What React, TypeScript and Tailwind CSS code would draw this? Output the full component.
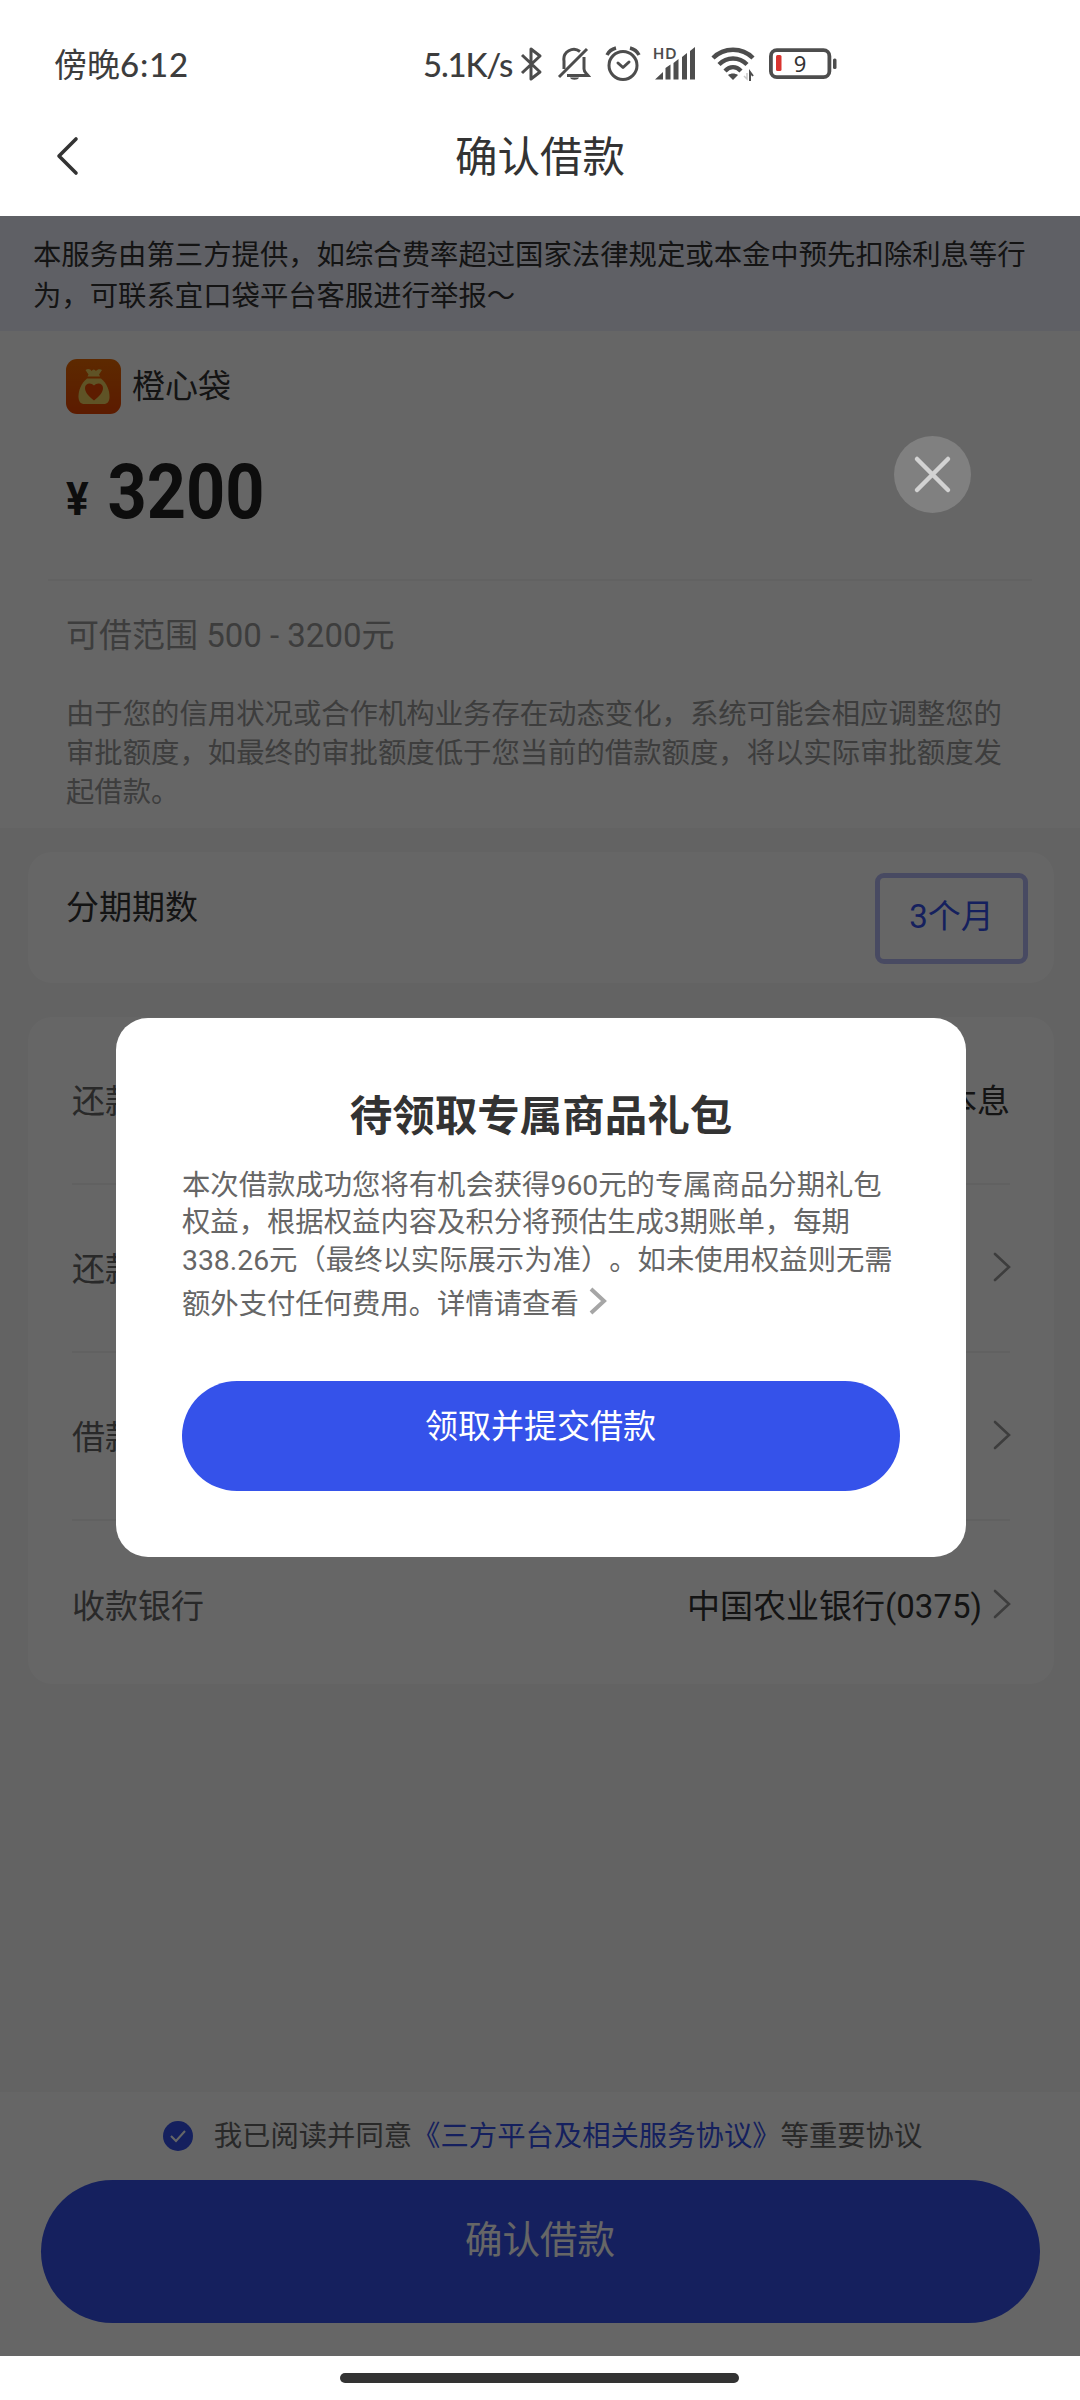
import React from 'react';

const SANS = "font-['Roboto','Noto_Sans_CJK_SC',sans-serif]";
const STATUS_FONT = "font-['Lato','Noto_Sans_CJK_SC',sans-serif]";

const StatusIcons: React.FC = () => (
  <div className="flex items-center text-[#4d4d4d]">
    <svg className="w-[24px] h-[36px] ml-[6px]" viewBox="0 0 24 36" fill="none" stroke="currentColor" strokeWidth="3">
      <path strokeLinejoin="round" d="M3 9l18 17-9 7V3l9 7L3 27" />
    </svg>
    <svg className="w-[34px] h-[36px] ml-[14px]" viewBox="0 0 34 36" fill="none" stroke="currentColor" strokeWidth="3">
      <path d="M2 31L30 3" />
      <path d="M7 23V15a10 10 0 0 1 16-9.5" />
      <path d="M27 11v12c0 3 2 4 4 6.500H10" />
      <path d="M13 31.500h9c-1 3-8 3-9 0z" fill="currentColor" stroke="none" />
    </svg>
    <svg className="w-[36px] h-[36px] ml-[14px]" viewBox="0 0 36 36" fill="none" stroke="currentColor" strokeWidth="3">
      <circle cx="18" cy="19.500" r="14" />
      <path strokeLinecap="round" strokeLinejoin="round" d="M13 17l5 4.500L24 16" />
      <path strokeWidth="3.500" d="M2 9c2-4 5-6 9-7M34 9c-2-4-5-6-9-7" />
    </svg>
    <svg className="w-[44px] h-[36px] ml-[12px]" viewBox="0 0 44 36" fill="currentColor" overflow="visible">
      <path d="M2 33.500l8-7.500v7.500zM12.500 22l5-3.500v15h-5zM20.500 17l5-4v20.500h-5zM29 11l5-4v26.500h-5zM37 5l5-4v32.500h-5z" />
      <text x="0" y="13" fontSize="14.500" fontWeight="700" letterSpacing="1" fontFamily="Lato">HD</text>
    </svg>
    <svg className="w-[44px] h-[36px] ml-[14px]" viewBox="0 0 44 36" fill="none" stroke="currentColor" strokeWidth="4.400">
      <path d="M2 12c11-11 29-11 40 0" />
      <path d="M8 18.500c8-8 20-8 28 0" />
      <path d="M14 25c5-5 11-5 16 0" />
      <path d="M17 29c3-2 7-2 10 0l-5 5z" fill="currentColor" stroke="none" />
      <path d="M39 35v-9l3 4" strokeWidth="2" />
      <path d="M36 27v6l-3-3" strokeWidth="1.500" className="text-[#c8c8c8]" />
    </svg>
    <svg className="w-[68px] h-[36px] ml-[14px]" viewBox="0 0 68 36" fill="none">
      <rect x="1.900" y="4.200" width="58.500" height="27" rx="6" stroke="currentColor" strokeWidth="3.800" />
      <rect x="7" y="9" width="5.500" height="16" rx="1.500" fill="#d9332e" />
      <rect x="64" y="12.500" width="3.500" height="10.500" rx="1.500" fill="currentColor" />
      <text x="31" y="25.500" fontSize="22" textAnchor="middle" fill="#333" fontFamily="Noto Sans">9</text>
    </svg>
  </div>
);

const Chevron: React.FC<{ className?: string }> = ({ className = '' }) => (
  <svg className={`w-[18px] h-[30px] ${className}`} viewBox="0 0 18 30" fill="none" stroke="currentColor">
    <path strokeLinecap="round" strokeWidth="2.600" d="M2 2l14 13L2 28" />
  </svg>
);

const BagLogo: React.FC = () => (
  <svg className="w-[55px] h-[55px]" viewBox="0 0 55 55">
    <defs>
      <linearGradient id="bag" x1="0" y1="0" x2="0" y2="1">
        <stop offset="0" stopColor="#e86800" />
        <stop offset="1" stopColor="#e64400" />
      </linearGradient>
    </defs>
    <rect width="55" height="55" rx="11" fill="url(#bag)" />
    <path d="M19.500 11c3-2 5-.5 6 1 1.500-2 3-2 4.500 0 1.500-2 4-2.500 6-1l-3 4.500 1 2H21.500l1-2z" fill="#eed060" />
    <path d="M21 19.500h14c6 5 8.500 12 8.500 18 0 5-2 7.500-6 7.500h-19c-4 0-6-2.500-6-7.500 0-6 2.500-13 8.500-18z" fill="#eed060" />
    <path d="M28 41.500c-5-4-9-8-9-12.500 0-5 6-6 9-2.500 3-3.500 9-2.500 9 2.500 0 4.500-4 8.500-9 12.500z" fill="#e84600" />
  </svg>
);

interface RowProps {
  label: string;
  value?: string;
  arrow?: boolean;
  last?: boolean;
}

const InfoRow: React.FC<RowProps> = ({ label, value, arrow, last }) => (
  <div
    className={`flex h-[168px] items-center justify-between text-[33px] ${
      last ? '' : 'border-b-2 border-[#f2f2f2]'
    }`}
  >
    <span className="pt-[3px] text-[#666]">{label}</span>
    <div className="flex items-center">
      <span className="pt-[3px] text-[#333]">{value}</span>
      {arrow && <Chevron className="mb-[2px] ml-[11px] -mr-[1px] text-[#999]" />}
    </div>
  </div>
);

const GiftDialog: React.FC = () => (
  <div className="absolute left-[116px] top-[802px] h-[539px] w-[850px] rounded-[32px] bg-white px-[66px] pt-[68px] [text-spacing-trim:space-all]">
    <h2 className="text-center text-[42.500px] font-bold leading-[62px] text-[#333]">待领取专属商品礼包</h2>
    <p className="mt-[19px] whitespace-nowrap text-[28.350px] leading-[37.300px] text-[#666]">
      本次借款成功您将有机会获得960元的专属商品分期礼包
      <br />
      权益，根据权益内容及积分将预估生成3期账单，每期
      <br />
      338.26元（最终以实际展示为准）。如未使用权益则无需
    </p>
    <p className="flex h-[50px] items-center pt-[2px] text-[28.350px] text-[#666]">
      额外支付任何费用。详情请查看
      <svg className="mb-[8px] ml-[10px] h-[28px] w-[18px]" viewBox="0 0 18 28" fill="none" stroke="#a6a6a6">
        <path strokeWidth="4" d="M2 2l13 12L2 26" />
      </svg>
    </p>
    <button className="mt-[52px] flex h-[110px] w-[718px] justify-center rounded-full bg-[#3552ea] pt-[21px] pr-[1px] text-[33px] leading-[49px] text-white">
      领取并提交借款
    </button>
  </div>
);

const App: React.FC = () => {
  return (
    <div className={`relative flex h-[2400px] w-[1080px] flex-col overflow-hidden bg-white ${SANS}`}>
      <header className="h-[216px]">
        <div className={`flex h-[128px] items-center pl-[54px] text-[33px] text-[#3d3d3d] ${STATUS_FONT}`}>
          <span className="w-[369px] pt-[1px]">
            傍晚<span className="font-medium tracking-[0.800px]">6:12</span>
          </span>
          <span className="w-[90px] whitespace-nowrap pt-[1px] font-medium tracking-[-1.200px]">5.1K/s</span>
          <StatusIcons />
        </div>
        <div className="flex h-[56px] items-center px-[56px]">
          <svg className="w-[24px] h-[40px]" viewBox="0 0 24 40" fill="none" stroke="#333" strokeWidth="3.600">
            <path strokeLinecap="round" strokeLinejoin="round" d="M20 3L3 20l17 17" />
          </svg>
          <h1 className="flex-1 pr-[24px] pt-[3px] text-center text-[42.500px] leading-[56px] text-[#333]">确认借款</h1>
        </div>
      </header>

      <main className="relative flex h-[2140px] flex-col bg-[#f7f7f7]">
        <div className="h-[115px] whitespace-nowrap bg-[#eef0fc] pl-[33px] pt-[19px] text-[28.370px] leading-[41.300px] text-[#333]">
          本服务由第三方提供，如综合费率超过国家法律规定或本金中预先扣除利息等行
          <br />
          为，可联系宜口袋平台客服进行举报～
        </div>

        <section className="h-[497px] bg-white px-[48px] pt-[28px]">
          <div className="flex items-center pl-[18px] text-[33px] text-[#333]">
            <BagLogo />
            <span className="ml-[11px] leading-[54px]">橙心袋</span>
          </div>
          <div className="flex h-[167px] items-baseline border-b-2 border-[#f5f5f5] pl-[18px] pt-[33px] font-bold text-[#222]">
            <div className="flex origin-left scale-x-90 items-baseline whitespace-nowrap leading-[90px]">
              <span className="-translate-y-[3px] text-[47px]">¥</span>
              <span className="ml-[21px] text-[76px]">3200</span>
            </div>
          </div>
          <div className="pl-[18px] pt-[30px] text-[33px] leading-[50px] text-[#999]">可借范围 500 - 3200元</div>
          <p className="whitespace-nowrap pl-[18px] pt-[34px] text-[28.370px] leading-[39px] text-[#999]">
            由于您的信用状况或合作机构业务存在动态变化，系统可能会相应调整您的
            <br />
            审批额度，如最终的审批额度低于您当前的借款额度，将以实际审批额度发
            <br />
            起借款。
          </p>
        </section>

        <section className="ml-[28px] mr-[26px] mt-[24px] flex h-[131px] items-start justify-between rounded-[24px] bg-white pl-[38px] pr-[26px] pt-[21px] text-[33px]">
          <span className="pt-[10px] leading-[50px] text-[#333]">分期期数</span>
          <div className="flex h-[91px] w-[153px] justify-center rounded-[9px] border-[5px] border-[#b4b9f6] pt-[14px] leading-[50px] text-[#3552ea]">
            3个月
          </div>
        </section>

        <section className="ml-[28px] mr-[26px] mt-[34px] h-[667px] rounded-[24px] bg-white pl-[44px] pr-[44px]">
          <InfoRow label="还款方式" value="等额本息" />
          <InfoRow label="还款计划" arrow />
          <InfoRow label="借款用途" arrow />
          <InfoRow label="收款银行" value="中国农业银行(0375)" arrow last />
        </section>

        <footer className="mt-auto h-[264px] bg-white px-[41px] pt-[21px]">
          <div className="flex h-[46px] items-center justify-center pl-[5px] text-[28.350px] text-[#666]">
            <svg className="mr-[21px] w-[30px] h-[30px]" viewBox="0 0 30 30" fill="none">
              <circle cx="15" cy="15" r="15" fill="#3552ea" />
              <path stroke="#fff" strokeWidth="2" d="M8 15l5 5 9-10" />
            </svg>
            <span className="pt-[3px]">我已阅读并同意</span>
            <span className="pt-[3px] text-[#3552ea]">《三方平台及相关服务协议》</span>
            <span className="pt-[3px]">等重要协议</span>
          </div>
          <button className="mt-[21px] flex h-[143px] w-[999px] justify-center rounded-full bg-[#3552ea] pt-[32px] pr-[1px] text-[37.500px] leading-[56px] text-white">
            确认借款
          </button>
        </footer>

        <div className="absolute inset-0 bg-black/60">
          <svg className="absolute left-[894px] top-[220px] h-[77px] w-[77px]" viewBox="0 0 77 77" fill="none">
            <circle cx="38.500" cy="38.500" r="38.500" fill="#808080" />
            <path stroke="#d2d2d2" strokeWidth="4.500" strokeLinecap="round" d="M23 23l31 31M54 23L23 54" />
          </svg>
          <GiftDialog />
        </div>
      </main>

      <div className="flex h-[44px] justify-center pt-[17px] pr-[2px]">
        <div className="h-[10px] w-[399px] rounded-full bg-[#333]" />
      </div>
    </div>
  );
};

export default App;
